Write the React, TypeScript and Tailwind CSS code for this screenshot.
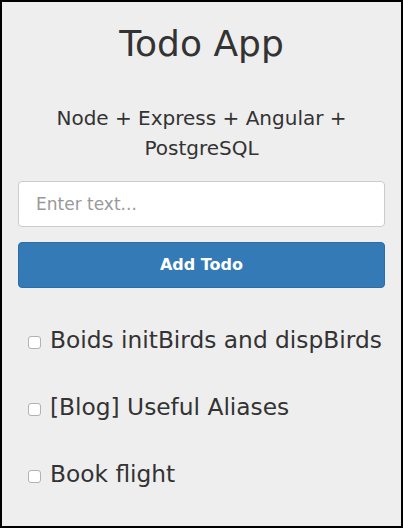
import React from "react";

const todos = ["Boids initBirds and dispBirds", "[Blog] Useful Aliases", "Book flight"];

export default function App() {
  return (
    <div
      className="w-[403px] h-[528px] border-2 border-black bg-[#eeeeee] text-[#333333] px-[16px] pt-[22px] overflow-hidden"
      style={{ fontFamily: '"DejaVu Sans", Verdana, sans-serif' }}
    >
      <h1 className="text-center text-[36px] leading-[40px] font-normal">Todo App</h1>
      <p className="mt-[39px] text-center text-[20px] leading-[30px]">
        Node + Express + Angular + PostgreSQL
      </p>
      <input
        type="text"
        placeholder="Enter text..."
        className="mt-[18px] block w-full h-[46px] border border-[#cccccc] rounded-[4px] bg-white px-[17px] text-[17px] text-[#555555] placeholder:text-[#999999] outline-none"
        style={{ fontFamily: '"DejaVu Sans", Verdana, sans-serif' }}
      />
      <button
        className="mt-[15px] block w-full h-[46px] rounded-[4px] bg-[#337ab7] border border-[#2e6da4] text-white text-[16px] font-bold"
        style={{ fontFamily: '"DejaVu Sans", Verdana, sans-serif' }}
      >
        Add Todo
      </button>
      <ul className="mt-[18px]">
        {todos.map((t) => (
          <li key={t} className="py-[17px] flex items-center text-[23.3px] leading-[33px] whitespace-nowrap">
            <span className="mt-[5px] ml-[10px] mr-[9px] w-[13px] h-[13px] shrink-0 border border-[#b2b2b2] rounded-[3px] bg-white" />
            <span>{t}</span>
          </li>
        ))}
      </ul>
    </div>
  );
}
